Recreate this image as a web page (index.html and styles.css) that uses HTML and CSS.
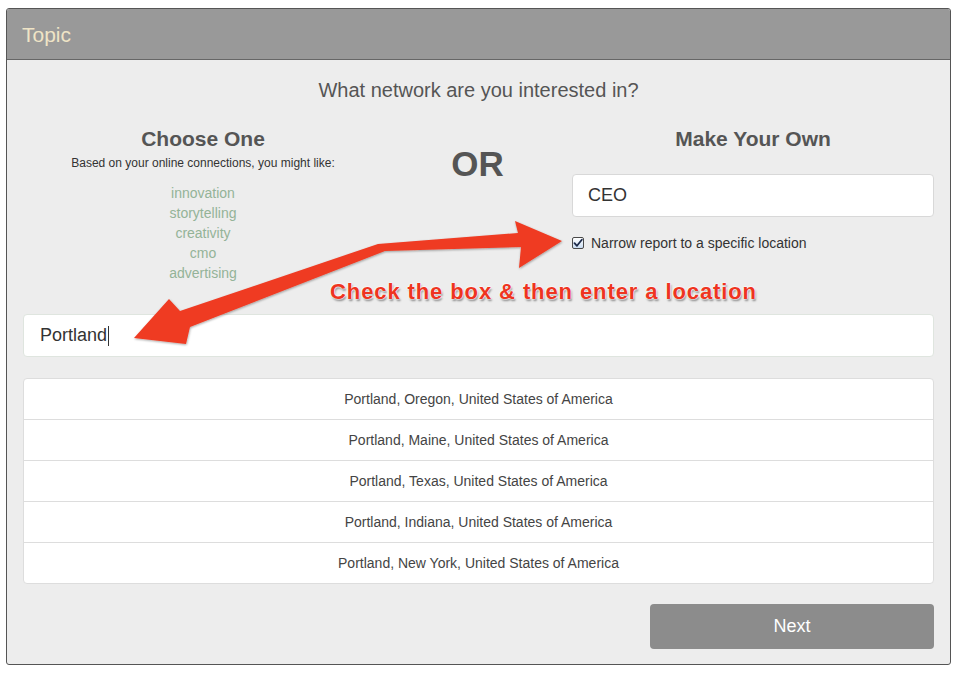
FILE: index.html
```html
<!DOCTYPE html>
<html>
<head>
<meta charset="utf-8">
<link rel="stylesheet" href="styles.css">
</head>
<body>
<div class="panel">
  <div class="panel-header">Topic</div>
  <div class="panel-body">
    <h2 class="question">What network are you interested in?</h2>
    <div class="choices">
      <div class="col col-left">
        <h3 class="col-title">Choose One</h3>
        <p class="hint">Based on your online connections, you might like:</p>
        <ul class="suggestions">
          <li>innovation</li>
          <li>storytelling</li>
          <li>creativity</li>
          <li>cmo</li>
          <li>advertising</li>
        </ul>
      </div>
      <div class="col col-mid">
        <div class="or">OR</div>
      </div>
      <div class="col col-right">
        <h3 class="col-title">Make Your Own</h3>
        <div class="text-input">CEO</div>
        <label class="check-row">
          <span class="checkbox"><svg width="10" height="10" viewBox="0 0 10 10"><path d="M1.5 5.2 L4 7.8 L8.8 1.8" fill="none" stroke="#1c2a4a" stroke-width="1.8" stroke-linecap="round" stroke-linejoin="round"/></svg></span>
          <span>Narrow report to a specific location</span>
        </label>
      </div>
    </div>
    <div class="location-input">Portland<span class="caret"></span></div>
    <ul class="results">
      <li>Portland, Oregon, United States of America</li>
      <li>Portland, Maine, United States of America</li>
      <li>Portland, Texas, United States of America</li>
      <li>Portland, Indiana, United States of America</li>
      <li>Portland, New York, United States of America</li>
    </ul>
    <div class="actions">
      <button class="next-btn">Next</button>
    </div>
  </div>
</div>

<svg class="arrows" width="960" height="674" viewBox="0 0 960 674">
  <defs>
    <filter id="sh" x="-10%" y="-10%" width="120%" height="120%">
      <feDropShadow dx="0.5" dy="1" stdDeviation="0.8" flood-color="#000" flood-opacity="0.35"/>
    </filter>
  </defs>
  <path filter="url(#sh)" fill="#ef3a22" d="M378 244 L518 233 L515 221 L562 241 L519 268 L521 247 L385 251 L190 327 L186 344 L134 338 L169 299 L180 311 Z"/>
</svg>
<div class="annotation">Check the box &amp; then enter a location</div>
</body>
</html>
```

FILE: styles.css
```css
* { box-sizing: border-box; }

html, body {
  margin: 0;
  padding: 0;
  background: #ffffff;
  font-family: "Liberation Sans", Arial, sans-serif;
  color: #333;
}

body {
  position: relative;
  width: 960px;
  height: 674px;
  padding: 8px 9px 0 6px;
}

.panel {
  width: 945px;
  height: 657px;
  border: 1px solid #555;
  border-radius: 3px;
  background: #ededed;
  overflow: hidden;
}

.panel-header {
  height: 51px;
  background: #999999;
  border-bottom: 1px solid #666;
  color: #efe4c6;
  font-size: 21px;
  line-height: 51px;
  padding-left: 15px;
}

.panel-body {
  padding: 18px 16px 0 16px;
}

.question {
  margin: 0;
  text-align: center;
  font-weight: normal;
  font-size: 20px;
  line-height: 24px;
  color: #555;
}

.choices {
  display: grid;
  grid-template-columns: 360px 1fr 362px;
  margin-top: 25px;
}

.col-title {
  margin: 0;
  text-align: center;
  font-size: 21px;
  line-height: 24px;
  font-weight: bold;
  color: #555;
}

.hint {
  margin: 4px 0 0;
  text-align: center;
  font-size: 12px;
  line-height: 16px;
  color: #333;
}

.suggestions {
  list-style: none;
  margin: 12px 0 0;
  padding: 0;
  text-align: center;
  font-size: 14px;
  line-height: 20px;
  color: #94b398;
}

.col-mid {
  display: flex;
  justify-content: center;
  padding-top: 16px;
}

.or {
  font-size: 35px;
  line-height: 42px;
  font-weight: bold;
  color: #555;
}

.text-input {
  margin-top: 23px;
  height: 43px;
  background: #fff;
  border: 1px solid #d8d8d8;
  border-radius: 4px;
  padding-left: 15px;
  font-size: 18px;
  line-height: 41px;
  color: #333;
}

.check-row {
  display: flex;
  align-items: center;
  gap: 7px;
  margin-top: 16px;
  height: 20px;
  font-size: 14px;
  color: #333;
}

.checkbox {
  width: 12px;
  height: 12px;
  border: 1px solid #4a4a4a;
  border-radius: 2px;
  background: linear-gradient(#ffffff, #c9dcf2);
  display: flex;
  align-items: center;
  justify-content: center;
}

.location-input {
  margin-top: 31px;
  height: 43px;
  background: #fff;
  border: 1px solid #dfe5df;
  border-radius: 4px;
  padding-left: 16px;
  font-size: 18px;
  line-height: 41px;
  color: #333;
  display: flex;
  align-items: center;
}

.caret {
  display: inline-block;
  width: 1px;
  height: 20px;
  background: #333;
  margin-left: 1px;
}

.results {
  list-style: none;
  margin: 21px 0 0;
  padding: 0;
  background: #fff;
  border: 1px solid #ddd;
  border-radius: 4px;
}

.results li {
  height: 41px;
  line-height: 40px;
  text-align: center;
  font-size: 14px;
  color: #444;
  border-top: 1px solid #ddd;
}

.results li:first-child {
  border-top: none;
  height: 40px;
}

.actions {
  display: flex;
  justify-content: flex-end;
  margin-top: 20px;
}

.next-btn {
  width: 284px;
  height: 45px;
  background: #8c8c8c;
  border: none;
  border-radius: 4px;
  color: #fff;
  font-family: "Liberation Sans", Arial, sans-serif;
  font-size: 18px;
}

.arrows {
  position: absolute;
  left: 0;
  top: 0;
  pointer-events: none;
}

.annotation {
  position: absolute;
  left: 330px;
  top: 278px;
  font-size: 22px;
  line-height: 28px;
  letter-spacing: 0.9px;
  font-weight: bold;
  color: #ee3420;
  white-space: nowrap;
  text-shadow: 0 0 2px #fff, 0 0 2px #fff, 0 0 1px #fff, 1px 1.5px 2px rgba(0,0,0,0.45);
}
```
